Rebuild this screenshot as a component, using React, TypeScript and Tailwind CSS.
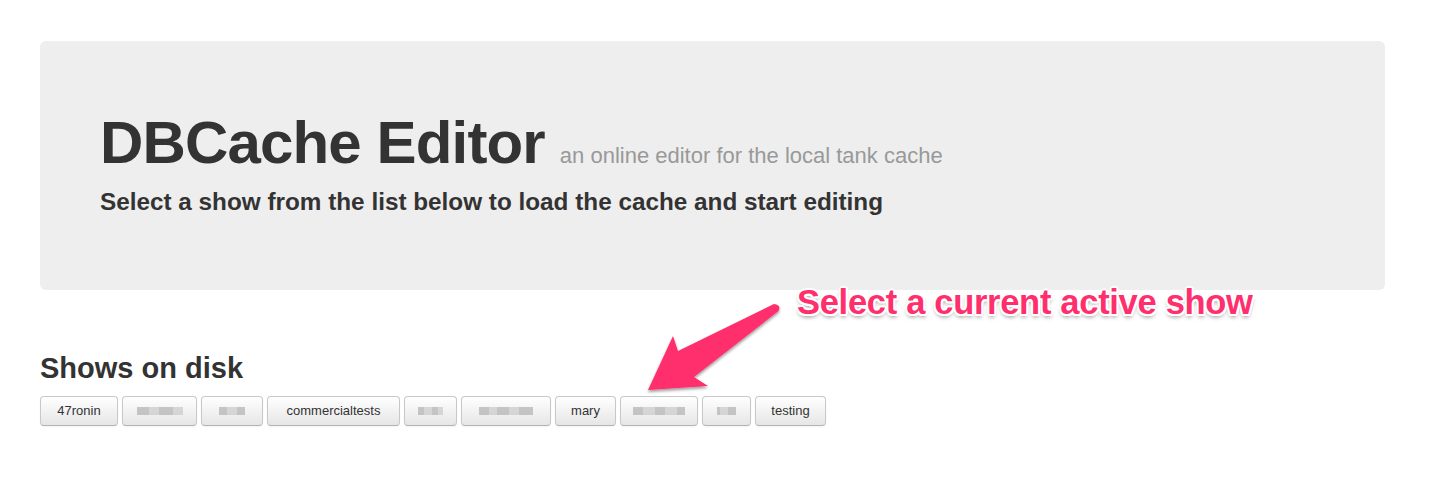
const SHOWS: { label?: string; width: number; blur?: number[] }[] = [
  { label: '47ronin', width: 78 },
  { width: 75, blur: [12, 10, 14, 10] },
  { width: 62, blur: [8, 10, 8] },
  { label: 'commercialtests', width: 133 },
  { width: 53, blur: [6, 8, 6, 5] },
  { width: 90, blur: [10, 8, 12, 10, 14] },
  { label: 'mary', width: 61 },
  { width: 78, blur: [10, 12, 10, 12, 8] },
  { width: 49, blur: [3, 8, 8] },
  { label: 'testing', width: 71 },
];

function ShowButton({ label, width, blur }: { label?: string; width: number; blur?: number[] }) {
  return (
    <button
      className="h-[30px] shrink-0 rounded-[4px] border border-[#c8c8c8] border-b-[#b3b3b3] bg-gradient-to-b from-white to-[#e6e6e6] text-[13px] text-[#333] shadow-[inset_0_1px_0_rgba(255,255,255,0.2),0_1px_2px_rgba(0,0,0,0.05)] flex items-center justify-center"
      style={{ width }}
    >
      {label ? (
        label
      ) : (
        <span className="flex items-center h-[8px] opacity-80">
          {blur!.map((w, i) => (
            <span
              key={i}
              className={i % 2 === 0 ? 'h-full bg-[#b9b9b9]' : 'h-full bg-[#cfcfcf]'}
              style={{ width: w }}
            />
          ))}
        </span>
      )}
    </button>
  );
}

export default function App() {
  return (
    <div className="relative w-[1434px] h-[490px] bg-white font-['Liberation_Sans',Arial,sans-serif] text-[#333]">
      <div className="px-10 pt-[41px]">
        {/* Hero */}
        <div className="w-[1345px] h-[249px] rounded-[6px] bg-[#eeeeee] px-[60px] pt-[72px]">
          <div className="flex items-baseline">
            <h1 className="text-[60px] leading-[60px] font-bold tracking-[-0.85px] text-[#333]">DBCache Editor</h1>
            <span className="ml-[15px] text-[22px] text-[#999]">an online editor for the local tank cache</span>
          </div>
          <p className="mt-[15px] text-[24.3px] leading-[28px] font-bold text-[#333]">
            Select a show from the list below to load the cache and start editing
          </p>
        </div>

        {/* Shows */}
        <h3 className="mt-[62px] text-[29px] leading-[32px] font-bold text-[#333]">Shows on disk</h3>
        <div className="mt-[12px] flex gap-[4px]">
          {SHOWS.map((s, i) => (
            <ShowButton key={i} {...s} />
          ))}
        </div>
      </div>

      {/* Annotation */}
      <div
        className="absolute left-[797px] top-[281px] text-[34.5px] leading-[42px] font-bold text-[#ff2f6d] tracking-[-0.3px]"
        style={{
          textShadow:
            '2px 0 0 #fff, -2px 0 0 #fff, 0 2px 0 #fff, 0 -2px 0 #fff, 1.5px 1.5px 0 #fff, -1.5px -1.5px 0 #fff, 1.5px -1.5px 0 #fff, -1.5px 1.5px 0 #fff, 0 3px 4px rgba(0,0,0,0.45)',
        }}
      >
        Select a current active show
      </div>
      <svg className="absolute left-0 top-0 pointer-events-none" width="1434" height="490">
        <defs>
          <filter id="sh" x="-20%" y="-20%" width="140%" height="140%">
            <feDropShadow dx="0" dy="2" stdDeviation="1.5" floodColor="#000" floodOpacity="0.4" />
          </filter>
        </defs>
        <path
          d="M774 304 Q781 305 779 310 Q778 312 776 313 L694 377 L708 386 L648 390 L673 336 L678 351 Z"
          fill="#ff2f6d"
          filter="url(#sh)"
        />
      </svg>
    </div>
  );
}
